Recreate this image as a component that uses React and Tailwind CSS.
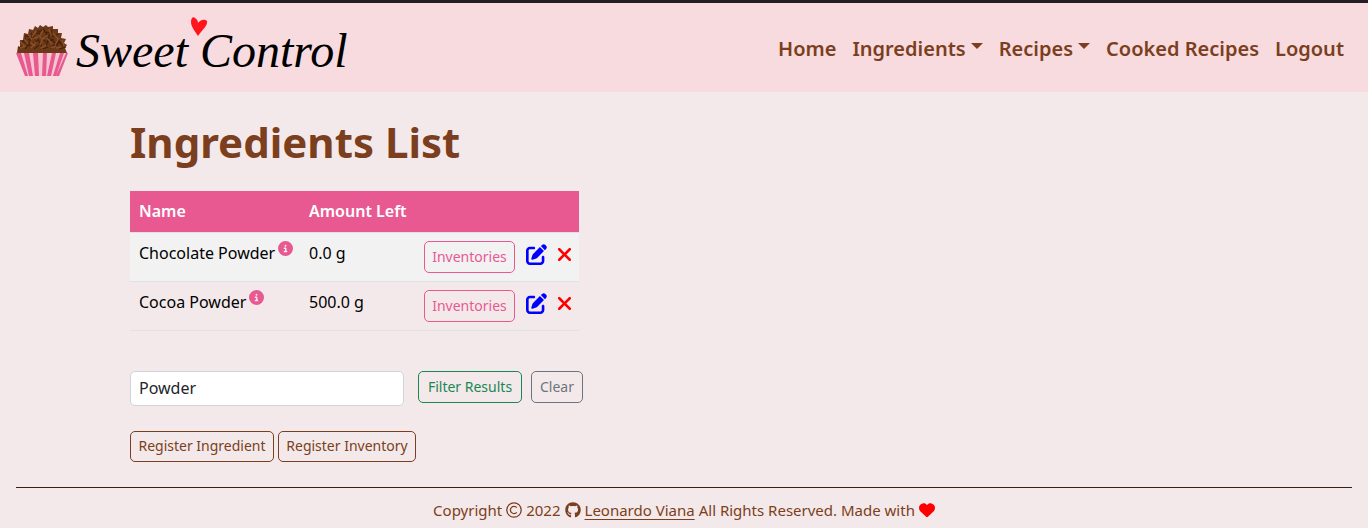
import { FaCircleInfo, FaPenToSquare, FaXmark, FaHeart, FaGithub } from "react-icons/fa6";

const rows = [
  { name: "Chocolate Powder", amount: "0.0 g", bg: "bg-[#f2f2f2]" },
  { name: "Cocoa Powder", amount: "500.0 g", bg: "" },
];

const button = "rounded-[5px] border text-sm whitespace-nowrap";

function Sprinkles() {
  const dark = "M5 19l5-6M12 21l3-8M17 19l6-5M26 22l-4-8M30 21l3-9M34 13l6 6M41 21l2-7M47 21l-4-5M9 11l7 1M15 8l4 7M22 5l2 8M27 4l5 7M36 5l-4 8M42 9l-6 3M8 17l7 4M18 24l5-4M35 24l4-5M45 17l-7 4M25 13l5 4M20 9l6-4M30 7l7 2M3 23l5-3M43 24l7-2M12 15l7-5M27 24l5-2M9 24l3-4M32 17l6-3";
  const light = "M4 16l4 5M8 14l4 5M14 17l5 4M12 9l4 6M20 6l-4 6M22 10l5 5M28 12l-4 8M31 13l5 6M37 8l5 6M43 13l-4 7M46 15l2 6M27 5l-3 6M33 4l2 6M17 14l5-2M30 20l-5 3M40 21l-5 2M20 17l-5 6M45 22l-5 1M10 21l-6 2M32 10l-4 3";
  return (
    <g>
      <path d="M1 28L2 21L4 22L4 15L7 15L8 8L12 9L13 4L17 5L19 1L22 3L24 0L27 2L30 0L32 2L37 1L37 4L42 4L42 8L46 8L45 13L50 14L48 18L51 20L49 23L51 28Z" fill="#6b3917" />
      <path d={dark} stroke="#46210e" strokeWidth="1.3" fill="none" />
      <path d={light} stroke="#894e28" strokeWidth="1.5" fill="none" />
    </g>
  );
}

function Logo() {
  return (
    <a href="#home" className="relative flex items-center gap-2 pt-1 text-black">
      <svg className="h-[52px] w-[52px]" viewBox="0 0 52 52" aria-hidden="true">
        <Sprinkles />
        <path d="M0 28H52L43 51H9Z" fill="#f6c6ce" />
        <path d="M0 28h5l7 23H9ZM8 28h5l4 23h-4ZM17 28h5l1 23h-4ZM27 28h4l-1 23h-4ZM36 28h4l-5 23h-4ZM44 28h4l-8 23h-3ZM50 28h2l-9 23h-3Z" fill="#e85992" />
      </svg>
      <span className="font-['Liberation_Serif',serif] text-5xl italic">Sweet Control</span>
      <svg className="absolute -top-1 left-[174px] h-5 w-[18px]" viewBox="0 0 18 20" aria-hidden="true">
        <path d="M8 19C5 14 1 10 1 5C1 1 3-1 5 1C7 2 8 4 8 6C11 2 15 2 17 4C18 9 12 13 8 19Z" fill="#ff151b" />
      </svg>
    </a>
  );
}

function Caret() {
  return <span className="mb-2 ml-[5px] inline-block border-x-6 border-t-6 border-x-transparent border-t-[#7b3f20] align-middle" />;
}

function CopyrightIcon() {
  return (
    <svg className="size-4" viewBox="0 0 16 16" fill="none" stroke="currentColor" strokeWidth="1.3" aria-hidden="true">
      <circle cx="8" cy="8" r="7.2" />
      <path d="M10.8 5.7A3.6 3.6 0 1 0 10.8 10.3" />
    </svg>
  );
}

export default function App() {
  return (
    <div className="min-h-screen bg-[#f4e9ea] font-['Noto_Sans',sans-serif] text-[#7b3f20]">
      <header className="flex h-[92px] items-center justify-between border-t-3 border-[#211e25] bg-[#f8dbdf] pt-0.5 pr-6 pl-4">
        <Logo />
        <nav className="flex items-center gap-4 text-xl font-semibold">
          <a href="#home">Home</a>
          <button type="button">Ingredients<Caret /></button>
          <button type="button">Recipes<Caret /></button>
          <a href="#cooked">Cooked Recipes</a>
          <a href="#logout">Logout</a>
        </nav>
      </header>

      <main className="px-[130px] pt-6">
        <h1 className="text-[42px] leading-[52px] font-bold">Ingredients List</h1>
        <table className="mt-[23px] w-[449px] table-fixed border-collapse text-left text-base text-black">
          <colgroup>
            <col className="w-[170px]" />
            <col className="w-[115px]" />
            <col />
          </colgroup>
          <thead>
            <tr className="h-[41px] border-b border-[#dee2e6] bg-[#e85992] text-white">
              <th scope="col" className="px-[9px] font-semibold">Name</th>
              <th scope="col" className="px-[9px] font-semibold whitespace-nowrap">Amount Left</th>
              <td />
            </tr>
          </thead>
          <tbody>
            {rows.map((row) => (
              <tr key={row.name} className={`h-[49px] border-b border-[#dee2e6] ${row.bg}`}>
                <td className="pt-2 pl-[9px] align-top whitespace-nowrap">
                  <span className="flex gap-[3px]">
                    {row.name}
                    <FaCircleInfo className="size-[15px] text-[#e85992]" />
                  </span>
                </td>
                <td className="px-[9px] pt-2 align-top">{row.amount}</td>
                <td className="pt-2 pl-[9px] align-top">
                  <div className="flex items-start">
                    <button type="button" className={`${button} h-8 w-[91px] border-[#e85992] text-[#e85992]`}>Inventories</button>
                    <a href="#edit" aria-label={`Edit ${row.name}`} className="mt-[3px] ml-[11px] text-[#0000ff]"><FaPenToSquare className="size-[21px]" /></a>
                    <a href="#delete" aria-label={`Delete ${row.name}`} className="mt-[3px] ml-[7px] text-[#ff0000]"><FaXmark className="size-[21px]" /></a>
                  </div>
                </td>
              </tr>
            ))}
          </tbody>
        </table>

        <form className="mt-10 flex items-start" onSubmit={(e) => e.preventDefault()}>
          <input aria-label="Ingredient name" defaultValue="Powder" className="h-[35px] w-[274px] rounded-[5px] border border-[#ced4da] bg-white px-2 text-base text-[#212529]" />
          <button type="submit" className={`${button} ml-[14px] h-8 w-[104px] border-[#198754] text-[#198754]`}>Filter Results</button>
          <button type="reset" className={`${button} ml-[9px] h-8 w-[52px] border-[#6c757d] text-[#6c757d]`}>Clear</button>
        </form>

        <div className="mt-[25px] flex gap-1">
          <button type="button" className={`${button} h-[31px] w-36 border-[#7b3f20]`}>Register Ingredient</button>
          <button type="button" className={`${button} h-[31px] w-[138px] border-[#7b3f20]`}>Register Inventory</button>
        </div>
      </main>

      <footer className="mx-4 mt-[25px] flex items-center justify-center gap-1 border-t border-[#3d1a16] pt-[11px] text-[15px] leading-[22px]">
        <span>Copyright</span>
        <CopyrightIcon />
        <span>2022</span>
        <FaGithub className="size-4" />
        <a href="#author" className="underline underline-offset-3">Leonardo Viana</a>
        <span>All Rights Reserved. Made with</span>
        <FaHeart className="size-4 text-[#ff0000]" />
      </footer>
    </div>
  );
}
